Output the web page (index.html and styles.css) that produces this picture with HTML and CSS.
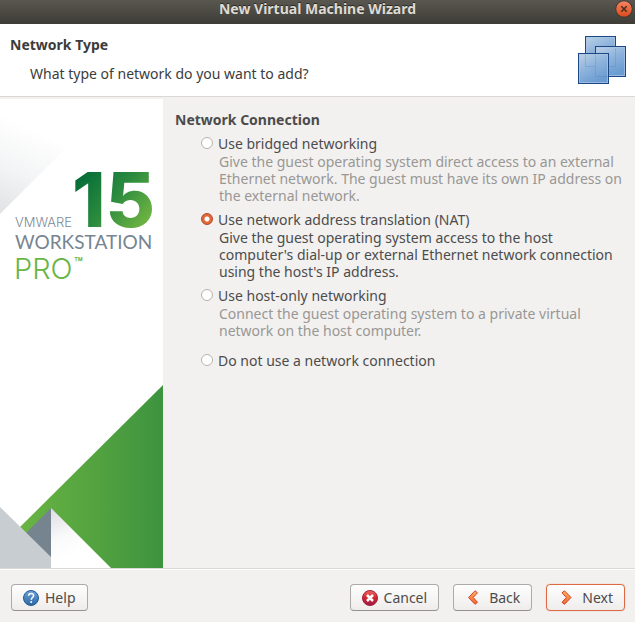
FILE: index.html
```html
<!DOCTYPE html>
<html lang="en">
<head>
<meta charset="utf-8">
<title>New Virtual Machine Wizard</title>
<link rel="stylesheet" href="styles.css">
</head>
<body>
<div class="titlebar">
  <span class="titlebar-text">New Virtual Machine Wizard</span>
  <button class="close" type="button" aria-label="Close">
    <svg width="18" height="18" viewBox="0 0 18 18">
      <defs><linearGradient id="closeFill" x1="0" y1="0" x2="0" y2="1"><stop offset="0" stop-color="#f68462"/><stop offset="1" stop-color="#de4a1c"/></linearGradient></defs>
      <circle cx="9" cy="9" r="8.5" fill="#35332e"/>
      <circle cx="9" cy="9" r="7.8" fill="url(#closeFill)"/>
      <path d="M6.3 6.3l5.4 5.4M11.7 6.3l-5.4 5.4" stroke="#47301f" stroke-width="1.6"/>
    </svg>
  </button>
</div>
<header class="header">
  <div>
    <h1 class="heading">Network Type</h1>
    <p class="question">What type of network do you want to add?</p>
  </div>
  <svg class="header-icon" width="48" height="48" viewBox="0 0 48 48" aria-hidden="true">
    <defs><linearGradient id="pane" x1="0" y1="0" x2=".5" y2="1"><stop offset="0" stop-color="#bfd3e6"/><stop offset=".5" stop-color="#8fb4dc"/><stop offset="1" stop-color="#6b9cd2"/></linearGradient></defs>
    <g fill="url(#pane)" stroke="#1e4785">
      <rect x="7.5" y=".5" width="30" height="30"/>
      <rect x="17.5" y="10.5" width="30" height="30"/>
      <rect x=".5" y="17.5" width="30" height="30"/>
    </g>
    <g fill="none" stroke="#a9c6e6" stroke-opacity=".7">
      <path d="M8.5 17V1.5h28V10"/>
      <path d="M18.500 17v-5.500h28v28H31"/>
      <rect x="1.500" y="18.500" width="28" height="28"/>
    </g>
    <path d="M7.500 18v12.500h10M17.500 18v22.500h12.500M37.500 12v18.500h-6" fill="none" stroke="#4676ae" stroke-opacity=".25"/>
  </svg>
</header>
<div class="body">
  <aside class="sidebar">
    <svg class="art" width="163" height="200" viewBox="0 0 163 200" role="img" aria-label="VMware Workstation 15 Pro">
      <defs>
        <linearGradient id="shade" gradientUnits="userSpaceOnUse" x1="0" y1="116" x2="38" y2="32"><stop offset="0" stop-color="#dfe1e4"/><stop offset=".5" stop-color="#f3f4f5"/><stop offset="1" stop-color="#fff"/></linearGradient>
        <linearGradient id="number" gradientUnits="userSpaceOnUse" x1="78" y1="72" x2="148" y2="130"><stop offset="0" stop-color="#006937"/><stop offset=".5" stop-color="#2c8b3e"/><stop offset="1" stop-color="#78b943"/></linearGradient>
      </defs>
      <path d="M0 0H115L0 115Z" fill="url(#shade)"/>
      <text class="logo-number" x="72" y="128" fill="url(#number)">15</text>
      <text class="logo-brand" x="15" y="128">VMWARE</text>
      <text class="logo-name" x="15" y="150">WORKSTATION</text>
      <text class="logo-edition" x="14" y="180">PRO</text>
      <text class="logo-mark" x="74" y="169">™</text>
    </svg>
    <svg class="art" width="163" height="183" viewBox="0 0 163 183" aria-hidden="true">
      <defs>
        <linearGradient id="green"><stop offset="0" stop-color="#6ab443"/><stop offset=".45" stop-color="#56a540"/><stop offset="1" stop-color="#3d933e"/></linearGradient>
        <linearGradient id="fold" x1="0" y1="0" x2=".35" y2=".8"><stop offset="0" stop-color="#dcdde2"/><stop offset=".6" stop-color="#fafafb"/><stop offset="1" stop-color="#fff"/></linearGradient>
      </defs>
      <path d="M163 0L20 142l41 41H163Z" fill="url(#green)"/>
      <path d="M51 123v60h60Z" fill="url(#fold)"/>
      <path d="M51 123L26 148l25 25Z" fill="#768490"/>
      <path d="M0 122l51 50v11H0Z" fill="#c8cdd1"/>
    </svg>
  </aside>
  <main class="content">
    <fieldset class="options">
      <legend class="heading">Network Connection</legend>
      <div class="option">
        <input type="radio" name="network" id="bridged" aria-describedby="bridged-text">
        <label for="bridged">Use bridged networking</label>
        <p class="muted" id="bridged-text">Give the guest operating system direct access to an external Ethernet network. The guest must have its own IP address on the external network.</p>
      </div>
      <div class="option">
        <input type="radio" name="network" id="nat" aria-describedby="nat-text" checked>
        <label for="nat">Use network address translation (NAT)</label>
        <p id="nat-text">Give the guest operating system access to the host computer's dial-up or external Ethernet network connection using the host's IP address.</p>
      </div>
      <div class="option">
        <input type="radio" name="network" id="hostonly" aria-describedby="hostonly-text">
        <label for="hostonly">Use host-only networking</label>
        <p class="muted" id="hostonly-text">Connect the guest operating system to a private virtual network on the host computer.</p>
      </div>
      <div class="option option-last">
        <input type="radio" name="network" id="none">
        <label for="none">Do not use a network connection</label>
      </div>
    </fieldset>
  </main>
</div>
<footer class="footer">
  <button class="button help" type="button">
    <svg width="16" height="16" viewBox="0 0 16 16" aria-hidden="true">
      <defs><linearGradient id="helpFill" x1="0" y1="0" x2="0" y2="1"><stop offset="0" stop-color="#6da3d8"/><stop offset="1" stop-color="#2c67a5"/></linearGradient></defs>
      <circle cx="8" cy="8" r="7.500" fill="url(#helpFill)" stroke="#245a94"/>
      <path d="M5.600 5.700C5.700 2.700 10.700 2.700 10.600 5.700C10.500 7.500 8.200 7.600 8.200 9.800" fill="none" stroke="#fff" stroke-width="1.500"/>
      <circle cx="8.200" cy="12.100" r="1" fill="#fff"/>
    </svg>
    Help
  </button>
  <button class="button" type="button">
    <svg width="16" height="16" viewBox="0 0 16 16" aria-hidden="true">
      <defs><linearGradient id="cancelFill" x1="0" y1="0" x2="0" y2="1"><stop offset="0" stop-color="#ee6962"/><stop offset=".5" stop-color="#cf2530"/><stop offset="1" stop-color="#9b1c4a"/></linearGradient></defs>
      <circle cx="8" cy="8" r="7.500" fill="url(#cancelFill)" stroke="#a51e36"/>
      <path d="M5 5l6 6M11 5l-6 6" stroke="#fff" stroke-width="2.500"/>
    </svg>
    Cancel
  </button>
  <button class="button arrow" type="button">
    <svg width="16" height="16" viewBox="0 0 16 16" aria-hidden="true">
      <defs><linearGradient id="arrowFill" x1="0" y1="0" x2="0" y2="1"><stop offset="0" stop-color="#fcb25c"/><stop offset="1" stop-color="#f0662e"/></linearGradient></defs>
      <path d="M10 .8L3.500 7.500 10 14.300l2.500-2-4.300-4.800 4.300-4.700Z" fill="url(#arrowFill)" stroke="#d5432c" stroke-linejoin="round"/>
    </svg>
    Back
  </button>
  <button class="button arrow default" type="button">
    <svg width="16" height="16" viewBox="0 0 16 16" aria-hidden="true">
      <path d="M6.500 .8L13 7.500 6.500 14.300 4 12.300 8.300 7.500 4 2.800Z" fill="url(#arrowFill)" stroke="#d5432c" stroke-linejoin="round"/>
    </svg>
    Next
  </button>
</footer>
</body>
</html>
```
FILE: styles.css
```css
* {
  box-sizing: border-box;
}

body {
  margin: 0;
  min-height: 100vh;
  display: flex;
  flex-direction: column;
  background: #f2f1f0;
  color: #4c4c4c;
  font: 14px/17px "Noto Sans", "Open Sans", sans-serif;
}

p,
h1 {
  margin: 0;
}

.titlebar {
  display: grid;
  grid-template-columns: 1fr auto 1fr;
  height: 24px;
  padding: 0 2px;
  background: linear-gradient(#59574f, #3d3c37);
  color: #dfdbd2;
  font-weight: 700;
  line-height: 18px;
  text-shadow: 0 -1px #2a2925;
}

.titlebar-text {
  grid-column: 2;
}

.close {
  justify-self: end;
  width: 18px;
  height: 18px;
  padding: 0;
  border: 0;
  background: none;
}

.close svg {
  display: block;
}

.header {
  display: flex;
  justify-content: space-between;
  padding: 12px 9px 12px 10px;
  border-bottom: 1px solid #dad7d5;
  background: #fff;
  color: #3c3c3c;
}

.heading {
  padding: 0;
  font-size: 14px;
  font-weight: 700;
  line-height: 18px;
}

.question {
  margin: 11px 0 0 20px;
  line-height: 18px;
}

.body {
  display: flex;
  flex: 1;
  margin-top: 2px;
  border-bottom: 1px solid #dad7d5;
}

.sidebar {
  display: flex;
  flex: none;
  flex-direction: column;
  justify-content: space-between;
  background: #fff;
}

.art {
  display: block;
}

.art text {
  font-family: Inter, "Open Sans", sans-serif;
}

.art .logo-number {
  font-size: 76px;
  font-weight: 800;
}

.art .logo-brand {
  fill: #7c8994;
  font-size: 13px;
  font-weight: 300;
}

.art .logo-name {
  fill: #768591;
  font-family: Lato, "Open Sans", sans-serif;
  font-size: 19px;
}

.art .logo-edition {
  fill: #69b545;
  font-size: 29px;
  font-weight: 300;
}

.art .logo-mark {
  fill: #69b545;
  font-size: 14px;
  font-weight: 600;
}

.content {
  flex: 1;
  padding: 12px 10px 12px 12px;
}

.options {
  margin: 0;
  padding: 0;
  border: 0;
}

.option {
  display: grid;
  grid-template-columns: 13px 1fr;
  column-gap: 4px;
  margin: 0 0 6px 26px;
}

.options legend {
  margin-bottom: 5px;
}

.option label {
  line-height: 19px;
}

.option p {
  grid-column: 2;
  padding-left: 1px;
}

.option .muted {
  color: #999794;
}

.option-last {
  margin-top: 12px;
}

.option input {
  appearance: none;
  width: 12px;
  height: 12px;
  margin: 3px 0 0;
  border: 1px solid #b6b2ae;
  border-radius: 50%;
  background: #fff;
}

.option input:checked {
  border-color: #b4461e;
  background: radial-gradient(circle, #fff 2px, #e06a3c 3px);
}

.footer {
  display: flex;
  gap: 14px;
  padding: 14px 10px 11px 11px;
  border-top: 1px solid #fcfcfc;
}

.button {
  display: flex;
  align-items: center;
  gap: 6px;
  height: 27px;
  padding: 0 11px;
  border: 1px solid #adaaa7;
  border-bottom-color: #94918e;
  border-radius: 4px;
  background: linear-gradient(#fefefe, #efedec);
  color: #4c4c4c;
  font: inherit;
}

.help {
  margin-right: auto;
}

.arrow {
  gap: 8px;
}

.default {
  border-color: #dd6a42;
  box-shadow: 0 0 1px #e98863;
}
```
